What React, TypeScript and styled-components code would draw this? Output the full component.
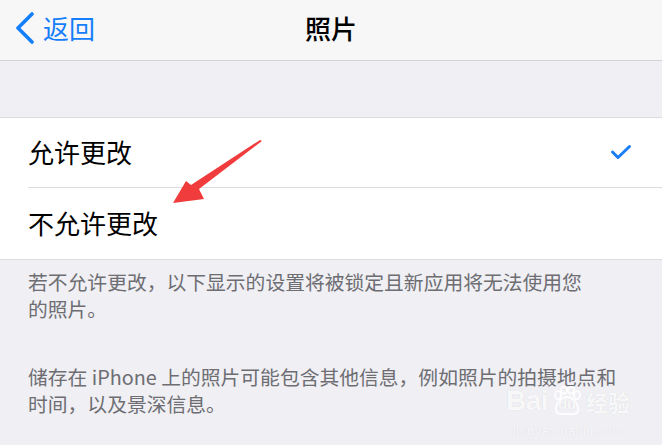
import React from "react";
import styled, { createGlobalStyle } from "styled-components";

const Global = createGlobalStyle`
  html, body { margin: 0; padding: 0; background: #efeff4; }
  body { font-family: "Noto Sans CJK SC", "Noto Sans", sans-serif; }
  * { box-sizing: border-box; }
`;

const Page = styled.div`
  position: relative;
  width: 662px;
  height: 445px;
  overflow: hidden;
  background: #efeff4;
`;

const NavBar = styled.header`
  height: 61px;
  background: #f7f7f8;
  border-bottom: 1px solid #d3d3d6;
  display: grid;
  grid-template-columns: 1fr auto 1fr;
  align-items: center;
`;

const BackButton = styled.div`
  display: flex;
  align-items: center;
  gap: 8px;
  padding-left: 15px;
  color: #147efb;
  font-size: 26px;
  line-height: 1;
  margin-top: -5px;
`;

const Title = styled.div`
  font-size: 26px;
  font-weight: 500;
  color: #000;
  line-height: 1;
  margin-top: -5px;
`;

const Spacer = styled.div`
  height: 57px;
  border-bottom: 1px solid #dcdce0;
`;

const Group = styled.section`
  background: #fff;
  border-bottom: 1px solid #dcdce0;
`;

const Row = styled.div<{ $height: number; $divider?: boolean }>`
  height: ${(p) => p.$height}px;
  margin-left: 28px;
  padding-right: 30px;
  display: flex;
  align-items: center;
  justify-content: space-between;
  border-bottom: ${(p) => (p.$divider ? "1px solid #dcdce0" : "none")};
`;

const RowLabel = styled.span`
  font-size: 26px;
  color: #000;
  line-height: 1;
  margin-top: -1px;
`;

const Footer = styled.p<{ $top: number }>`
  margin: ${(p) => p.$top}px 0 0 28px;
  width: 600px;
  font-size: 19.8px;
  line-height: 26.5px;
  color: #6d6d72;
`;

const Overlay = styled.svg`
  position: absolute;
  left: 0;
  top: 0;
  pointer-events: none;
`;

const Watermark = styled.div`
  position: absolute;
  left: 506px;
  top: 386px;
  display: flex;
  flex-direction: column;
  align-items: center;
  color: rgba(255, 255, 255, 0.85);
  text-shadow: 0 0 1px rgba(0, 0, 0, 0.12);
  font-family: "Liberation Sans", Arial, sans-serif;
`;

const MarkTop = styled.div`
  display: flex;
  align-items: center;
  gap: 2px;
`;

const Bai = styled.span`
  font-size: 28px;
  font-weight: 700;
  letter-spacing: -0.5px;
  line-height: 1;
`;

const Paw = styled.span`
  position: relative;
  width: 34px;
  height: 30px;
  display: flex;
  align-items: flex-end;
  justify-content: center;
  font-size: 15px;
  font-weight: 700;
  line-height: 1;
`;

const PawText = styled.span`
  position: relative;
  margin-bottom: 5px;
`;

const PawIcon = styled.svg`
  position: absolute;
  left: 0;
  top: 0;
`;

const JingYan = styled.span`
  font-family: "Noto Sans CJK SC", sans-serif;
  font-size: 22px;
  font-weight: 700;
  line-height: 1;
`;

const Domain = styled.span`
  font-size: 13px;
  line-height: 14px;
  margin-top: 8px;
  letter-spacing: 0.3px;
`;

function Chevron() {
  return (
    <svg width="20" height="32" viewBox="0 0 20 32">
      <polyline
        points="17,2 3,16 17,30"
        fill="none"
        stroke="#147efb"
        strokeWidth="3.6"
        strokeLinecap="round"
        strokeLinejoin="round"
      />
    </svg>
  );
}

function Check() {
  return (
    <svg width="22" height="18" viewBox="0 0 22 18">
      <polyline
        points="2.5,8 8,13.5 19.5,2.5"
        fill="none"
        stroke="#1a7ff5"
        strokeWidth="3"
        strokeLinecap="round"
        strokeLinejoin="round"
      />
    </svg>
  );
}

export default function App() {
  return (
    <>
      <Global />
      <Page>
        <NavBar>
          <BackButton>
            <Chevron />
            <span>返回</span>
          </BackButton>
          <Title>照片</Title>
          <div />
        </NavBar>
        <Spacer />
        <Group>
          <Row $height={70} $divider>
            <RowLabel>允许更改</RowLabel>
            <Check />
          </Row>
          <Row $height={71}>
            <RowLabel>不允许更改</RowLabel>
          </Row>
        </Group>
        <Footer $top={9}>
          若不允许更改，以下显示的设置将被锁定且新应用将无法使用您
          <br />
          的照片。
        </Footer>
        <Footer $top={42}>
          储存在 iPhone 上的照片可能包含其他信息，例如照片的拍摄地点和
          <br />
          时间，以及景深信息。
        </Footer>
        <Overlay width="662" height="445" viewBox="0 0 662 445">
          <polygon
            points="262,141 199,189 204,199 173,203 186,181 191,185 260,140"
            fill="#f03c3c"
          />
        </Overlay>
        <Watermark>
          <MarkTop>
            <Bai>Bai</Bai>
            <Paw>
              <PawIcon width="34" height="30" viewBox="0 0 34 30">
                <g fill="none" stroke="rgba(255,255,255,0.85)" strokeWidth="2">
                  <ellipse cx="8" cy="9" rx="3" ry="4" />
                  <ellipse cx="14" cy="4" rx="3" ry="3.5" />
                  <ellipse cx="21" cy="4" rx="3" ry="3.5" />
                  <ellipse cx="27" cy="9" rx="3" ry="4" />
                  <path d="M17 11 C10 11 5 20 6 25 C7 29 12 28 17 28 C22 28 27 29 28 25 C29 20 24 11 17 11 Z" />
                </g>
              </PawIcon>
              <PawText>du</PawText>
            </Paw>
            <JingYan>经验</JingYan>
          </MarkTop>
          <Domain>jingyan.baidu.com</Domain>
        </Watermark>
      </Page>
    </>
  );
}
